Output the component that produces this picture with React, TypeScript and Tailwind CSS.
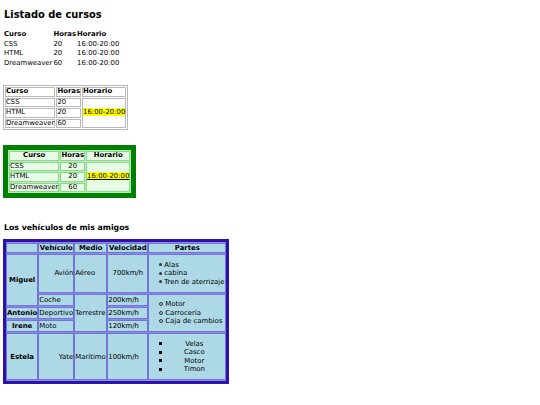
import React from "react";

const rows = [
  { curso: "CSS", horas: "20" },
  { curso: "HTML", horas: "20" },
  { curso: "Dreamweaver", horas: "60" },
];

function PlainTable() {
  return (
    <table className="border-separate border-spacing-[1px] mt-[8px]">
      <thead>
        <tr>
          <th className="p-0 text-left font-bold leading-[8.5px]">Curso</th>
          <th className="p-0 text-left font-bold leading-[8.5px]">Horas</th>
          <th className="p-0 text-left font-bold leading-[8.5px]">Horario</th>
        </tr>
      </thead>
      <tbody>
        {rows.map((r) => (
          <tr key={r.curso}>
            <td className="p-0 leading-[8.5px]">{r.curso}</td>
            <td className="p-0 leading-[8.5px]">{r.horas}</td>
            <td className="p-0 leading-[8.5px]">16:00-20:00</td>
          </tr>
        ))}
      </tbody>
    </table>
  );
}

function BorderTable() {
  const cell = "p-0 leading-[7.5px] border border-[#b8b8b8]";
  return (
    <table className="border-separate border-spacing-[1px] border border-[#b8b8b8] mt-[17px]">
      <thead>
        <tr>
          <th className={cell + " text-left font-bold"}>Curso</th>
          <th className={cell + " text-left font-bold"}>Horas</th>
          <th className={cell + " text-left font-bold"}>Horario</th>
        </tr>
      </thead>
      <tbody>
        {rows.map((r, i) => (
          <tr key={r.curso}>
            <td className={cell}>{r.curso}</td>
            <td className={cell}>{r.horas}</td>
            {i === 0 && (
              <td rowSpan={3} className={cell}>
                <span className="bg-[#ffff00]">16:00-20:00</span>
              </td>
            )}
          </tr>
        ))}
      </tbody>
    </table>
  );
}

function GreenTable() {
  const cell = "p-0 leading-[7.5px] bg-[#e6fce6] border border-[#8fd88f]";
  return (
    <table className="border-separate border-spacing-[1px] border-[5px] border-[#008000] bg-[#b4ecb4] mt-[15px]">
      <thead>
        <tr>
          <th className={cell + " text-center font-bold"}>Curso</th>
          <th className={cell + " text-center font-bold"}>Horas</th>
          <th className={cell + " text-center font-bold"}>Horario</th>
        </tr>
      </thead>
      <tbody>
        {rows.map((r, i) => (
          <tr key={r.curso}>
            <td className={cell + " text-left"}>{r.curso}</td>
            <td className={cell + " text-center"}>{r.horas}</td>
            {i === 0 && (
              <td rowSpan={3} className={cell + " text-center"}>
                <span className="bg-[#ffff00] underline">16:00-20:00</span>
              </td>
            )}
          </tr>
        ))}
      </tbody>
    </table>
  );
}

type Mark = "disc" | "circle" | "square";

function Marker({ kind }: { kind: Mark }) {
  if (kind === "circle")
    return <span className="h-[4px] w-[4px] shrink-0 rounded-full border border-[#333]" />;
  if (kind === "square") return <span className="h-[3px] w-[3px] shrink-0 bg-black" />;
  return <span className="h-[3px] w-[3px] shrink-0 rounded-full bg-[#333]" />;
}

function Parts({ items, kind, center }: { items: string[]; kind: Mark; center?: boolean }) {
  return (
    <ul className="my-[5.5px] pl-[10px] pr-[1px] leading-[8.5px]">
      {items.map((t) => (
        <li key={t} className="flex items-center gap-[2px] whitespace-nowrap">
          <Marker kind={kind} />
          <span className={center ? "flex-1 text-center" : ""}>{t}</span>
        </li>
      ))}
    </ul>
  );
}

function VehicleTable() {
  const c = "p-0 leading-[8px] bg-[#add8e6] border border-[#7474d8]";
  const th = c + " font-bold text-center";
  return (
    <table className="border-separate border-spacing-x-0 border-spacing-y-[1px] border-[3px] border-[#2c12a8] bg-[#8c8ce6] mt-[6px]">
      <thead>
        <tr>
          <th className={th + " w-[31px]"}></th>
          <th className={th + " w-[36px]"}>Vehículo</th>
          <th className={th + " w-[33px]"}>Medio</th>
          <th className={th + " w-[41px]"}>Velocidad</th>
          <th className={th}>Partes</th>
        </tr>
      </thead>
      <tbody>
        <tr>
          <th rowSpan={2} className={th}>Miguel</th>
          <td className={c + " text-right"}>Avión</td>
          <td className={c + " text-left"}>Aéreo</td>
          <td className={c + " text-center"}>700km/h</td>
          <td className={c}>
            <Parts kind="disc" items={["Alas", "cabina", "Tren de aterrizaje"]} />
          </td>
        </tr>
        <tr>
          <td className={c}>Coche</td>
          <td rowSpan={3} className={c}>Terrestre</td>
          <td className={c}>200km/h</td>
          <td rowSpan={3} className={c}>
            <Parts kind="circle" items={["Motor", "Carrocería", "Caja de cambios"]} />
          </td>
        </tr>
        <tr>
          <th className={th}>Antonio</th>
          <td className={c}>Deportivo</td>
          <td className={c}>250km/h</td>
        </tr>
        <tr>
          <th className={th}>Irene</th>
          <td className={c}>Moto</td>
          <td className={c}>120km/h</td>
        </tr>
        <tr>
          <th className={th}>Estela</th>
          <td className={c + " text-right"}>Yate</td>
          <td className={c}>Marítimo</td>
          <td className={c}>100km/h</td>
          <td className={c}>
            <Parts kind="square" center items={["Velas", "Casco", "Motor", "Timon"]} />
          </td>
        </tr>
      </tbody>
    </table>
  );
}

export default function App() {
  return (
    <div className="min-h-[405px] w-[540px] bg-white px-[3px] pt-[9px] font-['DejaVu_Sans',Verdana,sans-serif] text-[6.9px] text-black">
      <h2 className="pl-[1px] text-[9.9px] font-bold leading-[12px]">Listado de cursos</h2>
      <PlainTable />
      <BorderTable />
      <GreenTable />
      <h3 className="mt-[25px] pl-[1px] text-[7.8px] font-bold leading-[10px]">Los vehículos de mis amigos</h3>
      <VehicleTable />
    </div>
  );
}
